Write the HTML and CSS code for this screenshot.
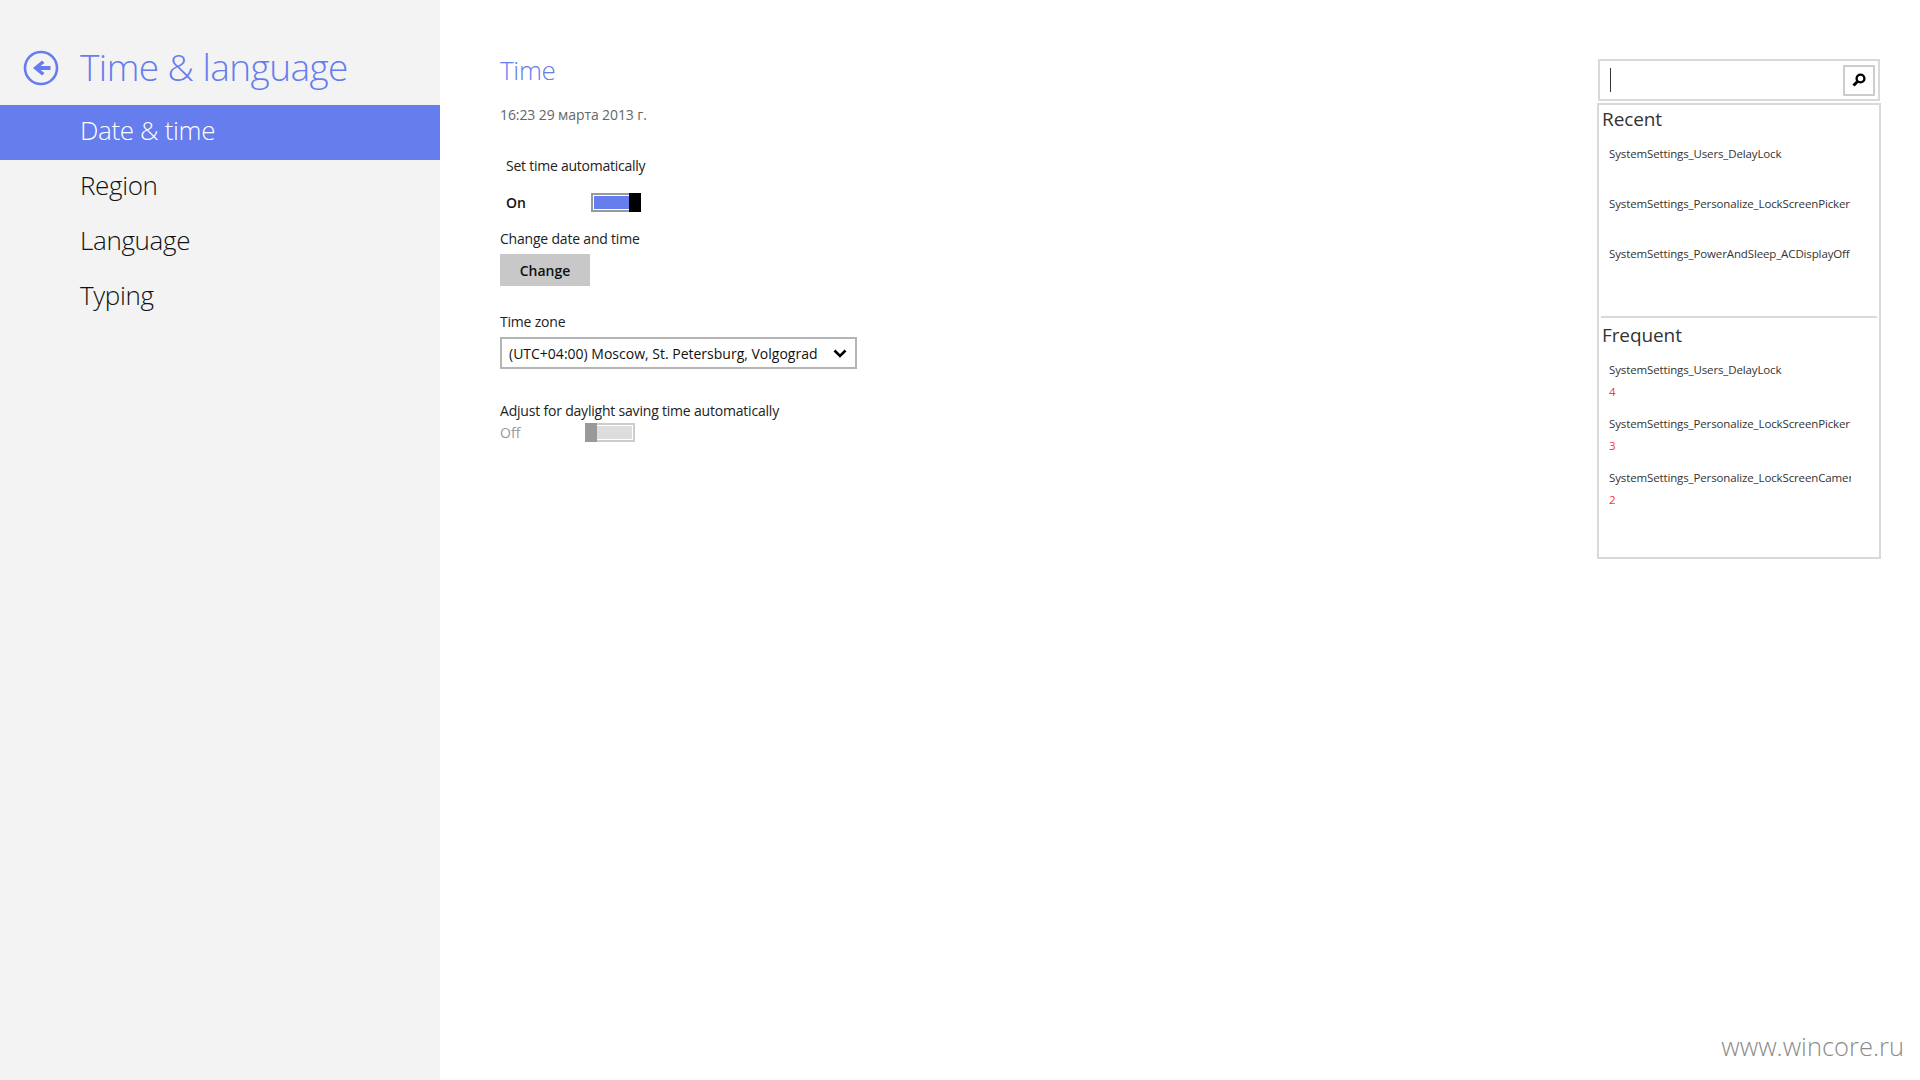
FILE: index.html
```html
<!DOCTYPE html>
<html lang="en">
<head>
<meta charset="utf-8">
<title>Time &amp; language</title>
<link rel="stylesheet" href="styles.css">
</head>
<body>
<div class="page">
  <nav class="sidebar">
    <header class="side-head">
      <svg class="back" width="36" height="36" viewBox="0 0 36 36" fill="none">
        <circle cx="18" cy="18" r="16" stroke="#667ded" stroke-width="2.6"/>
        <path d="M10 18L19 10.500L21.500 13L17.500 16H27.500V20H17.500L21.500 23L19 25.500Z" fill="#667ded"/>
      </svg>
      <h1 class="side-title">Time &amp; language</h1>
    </header>
    <a class="nav-item active">Date &amp; time</a>
    <a class="nav-item">Region</a>
    <a class="nav-item">Language</a>
    <a class="nav-item">Typing</a>
  </nav>
  <main class="content">
    <h2 class="section-title">Time</h2>
    <p class="date">16:23 29 марта 2013 г.</p>
    <p class="label set-auto">Set time automatically</p>
    <div class="toggle-row on-row">
      <span class="state on">On</span>
      <span class="toggle toggle-on"><span class="fill"></span><span class="thumb"></span></span>
    </div>
    <p class="label change-label">Change date and time</p>
    <button class="change-btn">Change</button>
    <p class="label zone-label">Time zone</p>
    <div class="select">
      <span class="select-text">(UTC+04:00) Moscow, St. Petersburg, Volgograd</span>
      <svg width="14" height="10" viewBox="0 0 14 10" fill="none" stroke="#000" stroke-width="2.6"><path d="M1.500 2.500l5.500 5.500L12.500 2.500"/></svg>
    </div>
    <p class="label adjust-label">Adjust for daylight saving time automatically</p>
    <div class="toggle-row off-row">
      <span class="state off">Off</span>
      <span class="toggle toggle-off"><span class="thumb"></span><span class="fill"></span></span>
    </div>
  </main>
  <aside class="debug">
    <div class="search">
      <span class="caret"></span>
      <span class="search-btn">
        <svg width="14" height="14" viewBox="0 0 14 14" fill="none" stroke="#000"><circle cx="8.500" cy="5.500" r="3.900" stroke-width="2.400"/><path d="M5.800 8.200L1.500 12.500" stroke-width="3"/></svg>
      </span>
    </div>
    <div class="lists">
      <section class="recent">
        <h3 class="list-title">Recent</h3>
        <div class="setting recent-item">SystemSettings_Users_DelayLock</div>
        <div class="setting recent-item">SystemSettings_Personalize_LockScreenPicker</div>
        <div class="setting recent-item">SystemSettings_PowerAndSleep_ACDisplayOff</div>
      </section>
      <section class="frequent">
        <h3 class="list-title">Frequent</h3>
        <div class="freq-item"><div class="setting">SystemSettings_Users_DelayLock</div><div class="count">4</div></div>
        <div class="freq-item"><div class="setting">SystemSettings_Personalize_LockScreenPicker</div><div class="count">3</div></div>
        <div class="freq-item"><div class="setting">SystemSettings_Personalize_LockScreenCamera</div><div class="count">2</div></div>
      </section>
    </div>
  </aside>
  <div class="watermark">www.wincore.ru</div>
</div>
</body>
</html>
```
FILE: styles.css
```css
* { box-sizing: border-box; }
html, body { margin: 0; height: 100%; }
body { font-family: "Open Sans", "Noto Sans", "DejaVu Sans", sans-serif; color: #1a1a1a; background: #fff; overflow: hidden; }
h1, h2, h3, p { margin: 0; font-weight: inherit; }
.page { position: relative; display: flex; width: 1920px; height: 1080px; }

.sidebar { width: 440px; flex: none; background: #f3f3f3; }
.side-head { display: flex; align-items: center; height: 105px; padding: 29px 0 0 23px; }
.back { flex: none; margin-top: 2px; }
.side-title { margin-left: 21px; font-size: 37px; line-height: 50px; font-weight: 300; letter-spacing: -0.57px; color: #667ded; white-space: nowrap; }
.nav-item { display: block; height: 55px; padding-left: 80px; font-size: 26px; line-height: 50px; font-weight: 300; letter-spacing: -0.35px; color: #111; }
.nav-item.active { background: #667ded; color: #fff; }

.content { flex: 1; padding: 53px 0 0 60px; font-size: 14px; line-height: 20px; }
.section-title { font-size: 26px; line-height: 34px; font-weight: 300; letter-spacing: -0.3px; color: #667ded; }
.date { margin-top: 18px; color: #666; letter-spacing: -0.1px; }
.label { color: #222; letter-spacing: -0.2px; }
.set-auto { margin: 31px 0 0 6px; letter-spacing: -0.25px; }
.toggle-row { display: flex; align-items: center; height: 19px; }
.on-row { margin: 17px 0 0 6px; }
.off-row { margin-top: 2px; }
.state { width: 85px; flex: none; }
.state.on { font-weight: 600; color: #111; }
.state.off { color: #999; }
.toggle { display: flex; width: 50px; height: 19px; border: 2px solid; }
.toggle-on { border-color: #999; border-right: 0; padding: 1px 0 1px 1px; }
.toggle-on .fill { flex: 1; background: #667ded; }
.toggle-on .thumb { width: 12px; flex: none; background: #000; margin: -3px 0; }
.toggle-off { border-color: #ccc; border-left: 0; padding: 1px 1px 1px 0; }
.toggle-off .fill { flex: 1; background: #ddd; }
.toggle-off .thumb { width: 12px; flex: none; background: #999; margin: -3px 0; }
.change-label { margin-top: 17px; }
.change-btn { display: block; width: 90px; height: 32px; margin-top: 5px; padding: 0; border: 0; background: #c8c8c8; font: 600 14px "Open Sans", sans-serif; color: #111; }
.zone-label { margin-top: 26px; }
.select { display: flex; align-items: center; justify-content: space-between; width: 357px; height: 32px; margin-top: 5px; padding: 0 8px 0 7px; border: 2px solid #b5b5b5; color: #111; }
.select-text { padding-top: 2px; }
.adjust-label { margin-top: 32px; }

.debug { width: 284px; flex: none; margin-right: 39px; padding-top: 59px; }
.search { display: flex; align-items: center; justify-content: space-between; width: 282px; height: 42px; margin-left: 1px; padding: 0 3px 0 10px; border: 2px solid #d9d9d9; }
.caret { width: 1px; height: 24px; background: #333; }
.search-btn { display: flex; align-items: center; justify-content: center; width: 32px; height: 31px; border: 2px solid #ccc; }
.lists { height: 456px; margin-top: 2px; border: 2px solid #d9d9d9; padding: 0 2px; }
.recent { height: 213px; border-bottom: 2px solid #d9d9d9; }
.list-title { padding-left: 1px; font-size: 19px; line-height: 26px; font-weight: 400; letter-spacing: -0.1px; color: #333; }
.recent .list-title { padding-top: 1px; height: 29px; }
.setting { width: 242px; margin-left: 8px; overflow: hidden; white-space: nowrap; font-size: 11.500px; line-height: 16px; letter-spacing: -0.13px; color: #333; }
.recent-item { height: 50px; }
.recent .recent-item:first-of-type { margin-top: 12px; }
.frequent .list-title { padding-top: 4px; height: 30px; }
.freq-item { height: 54px; }
.freq-item:first-of-type { margin-top: 14px; }
.count { margin: 6px 0 0 8px; font-size: 11.500px; line-height: 16px; color: #f33; }

.watermark { position: absolute; right: 16px; bottom: 19px; font-size: 25.500px; line-height: 30px; font-weight: 300; color: #8c8c8c; }
```
